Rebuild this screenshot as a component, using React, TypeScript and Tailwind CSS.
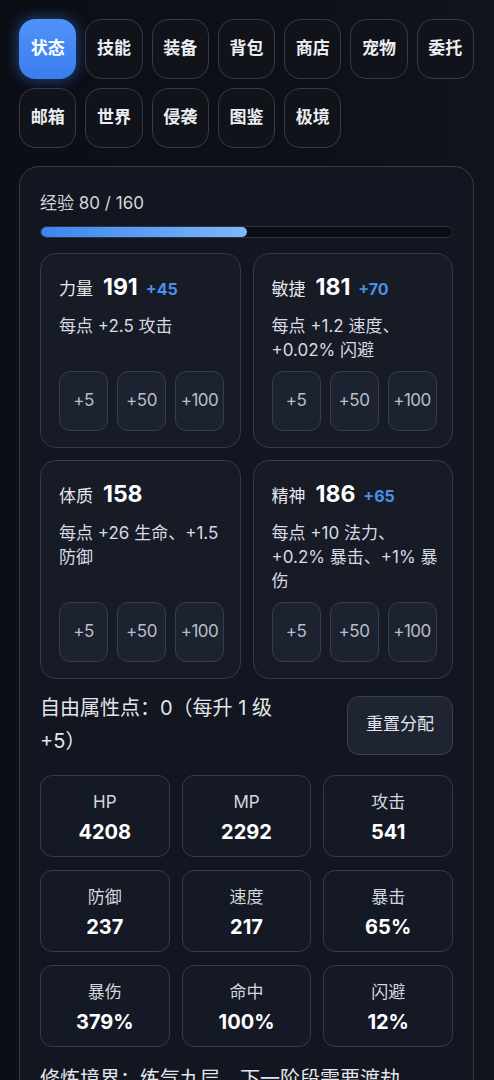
import React from "react";

const FONT = "font-['Inter','Noto_Sans_CJK_SC',sans-serif]";

const TABS_ROW = ["状态", "技能", "装备", "背包", "商店", "宠物", "委托", "邮箱", "世界", "侵袭", "图鉴", "极境"];

type Attr = { name: string; value: number; bonus?: number; desc: string };

const ATTRS: Attr[] = [
    { name: "力量", value: 191, bonus: 45, desc: "每点 +2.5 攻击" },
    { name: "敏捷", value: 181, bonus: 70, desc: "每点 +1.2 速度、+0.02% 闪避" },
    { name: "体质", value: 158, desc: "每点 +26 生命、+1.5 防御" },
    { name: "精神", value: 186, bonus: 65, desc: "每点 +10 法力、+0.2% 暴击、+1% 暴伤" },
];

const STATS: [string, string][] = [
    ["HP", "4208"],
    ["MP", "2292"],
    ["攻击", "541"],
    ["防御", "237"],
    ["速度", "217"],
    ["暴击", "65%"],
    ["暴伤", "379%"],
    ["命中", "100%"],
    ["闪避", "12%"],
];

function AttrCard({ attr }: { attr: Attr }) {
    return (
        <div className="flex flex-col rounded-[16px] border border-[#343a47] bg-[#161b26] pl-[18px] pr-[13px] pt-[18px] pb-[16px]">
            <div className="flex items-baseline h-[30px] leading-[30px]">
                <span className="text-[17px] text-[#e5e7eb]">{attr.name}</span>
                <span className="ml-[10px] text-[23px] font-bold text-white">{attr.value}</span>
                {attr.bonus !== undefined && (
                    <span className="ml-[8px] text-[16px] font-bold text-[#4b8fe8]">+{attr.bonus}</span>
                )}
            </div>
            <div className="mt-[12px] text-[17px] leading-[24px] text-[#d7dae0]">{attr.desc}</div>
            <div className="mt-auto pt-[9px] flex gap-[9px]">
                {["+5", "+50", "+100"].map((b) => (
                    <button
                        key={b}
                        className="h-[60px] w-[49px] rounded-[11px] border border-[#363d4b] bg-[#1d2230] text-[17px] text-[#b9bec8] tracking-[-0.5px]"
                    >
                        {b}
                    </button>
                ))}
            </div>
        </div>
    );
}

export default function App() {
    return (
        <div className={`${FONT} min-h-[1080px] h-[1080px] overflow-hidden bg-[linear-gradient(90deg,#0b0e15_0%,#0d1019_60%,#10141c_100%)] px-[19px] pt-[19px]`}>
            {/* Tabs */}
            <div className="grid grid-cols-7 gap-x-[9px] gap-y-[9px] w-[455px]">
                {TABS_ROW.map((t, i) => (
                    <button
                        key={t}
                        className={
                            i === 0
                                ? "h-[60px] rounded-[16px] bg-[linear-gradient(180deg,#4f93f8,#3a7def)] text-[17px] font-bold text-white shadow-[0_0_14px_rgba(59,130,246,0.55)]"
                                : "h-[60px] rounded-[16px] border border-[#363a45] bg-[#10131a] text-[17px] font-bold text-[#eceef2]"
                        }
                    >
                        {t}
                    </button>
                ))}
            </div>

            {/* Panel */}
            <div className="mt-[18px] w-[455px] rounded-[20px] border border-[#373c48] bg-[#121620] px-[20px] pt-[24px] pb-[20px]">
                <div className="text-[17px] leading-[24px] text-[#d4d7dd]">经验 80 / 160</div>
                <div className="mt-[11px] h-[12px] rounded-full border border-[#2c313c] bg-[#0a0d13] overflow-hidden">
                    <div className="h-full w-1/2 rounded-full bg-[linear-gradient(90deg,#3d84f0,#7cb9fb)]" />
                </div>

                <div className="mt-[15px] grid grid-cols-2 gap-x-[12px] gap-y-[12px]">
                    {ATTRS.map((a) => (
                        <AttrCard key={a.name} attr={a} />
                    ))}
                </div>

                <div className="mt-[13px] flex items-center justify-between">
                    <div className="w-[272px] text-[20px] leading-[33px] text-[#e3e5ea]">自由属性点：0（每升 1 级 +5）</div>
                    <button className="h-[59px] w-[106px] shrink-0 rounded-[12px] border border-[#3a4150] bg-[#1e2431] text-[17px] text-[#e3e5ea]">
                        重置分配
                    </button>
                </div>

                <div className="mt-[17px] grid grid-cols-3 gap-x-[12px] gap-y-[13px]">
                    {STATS.map(([k, v]) => (
                        <div key={k} className="h-[82px] rounded-[12px] border border-[#353b48] bg-[#141925] pt-[14px] text-center">
                            <div className="text-[17px] leading-[24px] text-[#d4d7dd]">{k}</div>
                            <div className="mt-[3px] text-[20px] leading-[30px] font-bold text-white">{v}</div>
                        </div>
                    ))}
                </div>

                <div className="mt-[16px] text-[20px] leading-[33px] text-[#e3e5ea]">修炼境界：练气九层，下一阶段需要渡劫</div>
            </div>
        </div>
    );
}
